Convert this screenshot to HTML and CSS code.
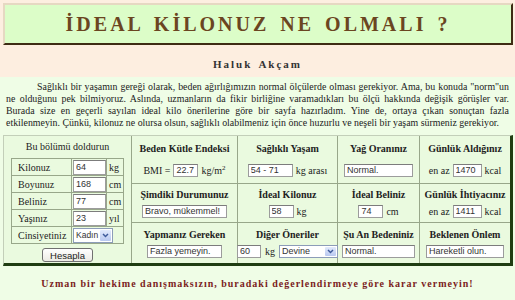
FILE: index.html
```html
<!DOCTYPE html>
<html lang="tr">
<head>
    <meta charset="UTF-8">
    <meta name="viewport" content="width=device-width, initial-scale=1.0">
    <link rel="stylesheet" href="styles.css">
</head>
<body>
    <header class="title-box">
        <h1>İDEAL KİLONUZ NE OLMALI ?</h1>
    </header>
    <p class="author">Haluk Akçam</p>

    <main class="panel">
        <p class="intro">
            <span>Sağlıklı bir yaşamın gereği olarak, beden ağırlığımızın normal ölçülerde olması gerekiyor. Ama, bu konuda "norm"un</span>
            <span>ne olduğunu pek bilmiyoruz. Aslında, uzmanların da fikir birliğine varamadıkları bu ölçü hakkında değişik görüşler var.</span>
            <span>Burada size en geçerli sayılan ideal kilo önerilerine göre bir sayfa hazırladım. Yine de, ortaya çıkan sonuçtan fazla</span>
            <span>etkilenmeyin. Çünkü, kilonuz ne olursa olsun, sağlıklı olabilmeniz için önce huzurlu ve neşeli bir yaşam sürmeniz gerekiyor.</span>
        </p>

        <div class="calc">
            <form class="inputs">
                <div class="inputs-title">Bu bölümü doldurun</div>
                <div class="form-grid">
                    <label>Kilonuz</label><span class="cell"><input class="box" value="64"></span><span class="unit">kg</span>
                    <label>Boyunuz</label><span class="cell"><input class="box" value="168"></span><span class="unit">cm</span>
                    <label>Beliniz</label><span class="cell"><input class="box" value="77"></span><span class="unit">cm</span>
                    <label>Yaşınız</label><span class="cell"><input class="box" value="23"></span><span class="unit">yıl</span>
                    <label>Cinsiyetiniz</label>
                    <span class="cell wide">
                        <span class="select">
                            <select><option>Kadın</option><option>Erkek</option></select>
                            <span class="arrow"><svg width="7" height="5" viewBox="0 0 7 5"><path d="M1 1 L3.5 3.6 L6 1" stroke="#3d5a9a" stroke-width="1.4" fill="none"/></svg></span>
                        </span>
                    </span>
                </div>
                <button type="button" class="btn">Hesapla</button>
            </form>

            <div class="results">
                <div class="res row-1">
                    <h3>Beden Kütle Endeksi</h3>
                    <div class="line">BMI = <input class="box w25" value="22.7"> kg/m<sup>2</sup></div>
                </div>
                <div class="res row-1">
                    <h3>Sağlıklı Yaşam</h3>
                    <div class="line"><input class="box w45" value="54 - 71"> kg arası</div>
                </div>
                <div class="res row-1">
                    <h3>Yağ Oranınız</h3>
                    <div class="line"><input class="box w69" value="Normal."></div>
                </div>
                <div class="res row-1">
                    <h3>Günlük Aldığınız</h3>
                    <div class="line">en az <input class="box w29" value="1470"> kcal</div>
                </div>

                <div class="res">
                    <h3>Şimdiki Durumunuz</h3>
                    <div class="line"><input class="box w85" value="Bravo, mükemmel!"></div>
                </div>
                <div class="res">
                    <h3>İdeal Kilonuz</h3>
                    <div class="line"><input class="box w25" value="58"> kg</div>
                </div>
                <div class="res">
                    <h3>İdeal Beliniz</h3>
                    <div class="line"><input class="box w25" value="74"> cm</div>
                </div>
                <div class="res">
                    <h3>Günlük İhtiyacınız</h3>
                    <div class="line">en az <input class="box w29" value="1411"> kcal</div>
                </div>

                <div class="res">
                    <h3>Yapmanız Gereken</h3>
                    <div class="line"><input class="box w75" value="Fazla yemeyin."></div>
                </div>
                <div class="res">
                    <h3>Diğer Öneriler</h3>
                    <div class="line tight">
                        <input class="box w24" value="60"> kg
                        <span class="select small">
                            <select><option>Devine</option><option>Robinson</option></select>
                            <span class="arrow"><svg width="7" height="5" viewBox="0 0 7 5"><path d="M1 1 L3.5 3.6 L6 1" stroke="#3d5a9a" stroke-width="1.4" fill="none"/></svg></span>
                        </span>
                    </div>
                </div>
                <div class="res">
                    <h3>Şu An Bedeniniz</h3>
                    <div class="line"><input class="box w73" value="Normal."></div>
                </div>
                <div class="res">
                    <h3>Beklenen Önlem</h3>
                    <div class="line"><input class="box w78" value="Hareketli olun."></div>
                </div>
            </div>
        </div>

        <p class="warning">Uzman bir hekime danışmaksızın, buradaki değerlendirmeye göre karar vermeyin!</p>
    </main>
</body>
</html>
```

FILE: styles.css
```css
:root {
    --peach: #fdeee0;
    --green: #effde6;
    --cell: #eafadf;
    --title-bg: #dcfdc8;
    --line: #98a78a;
    --dark: #1f3d12;
    --brown: #6b4521;
    --text: #222;
    --serif: "Liberation Serif", "Times New Roman", serif;
    --sans: "Liberation Sans", Arial, sans-serif;
}

* {
    box-sizing: border-box;
}

body {
    margin: 0;
    background: var(--peach);
    font-family: var(--serif);
    color: var(--text);
}

.title-box {
    margin: 3px 2px 0 3px;
    height: 42px;
    border: 2px solid;
    border-color: #e6d8c2 #3e2c14 #3e2c14 #e6d8c2;
    background: var(--title-bg);
    display: flex;
    align-items: center;
    justify-content: center;
}

.title-box h1 {
    margin: 0;
    font-size: 20px;
    letter-spacing: 3px;
    word-spacing: 3px;
    color: var(--brown);
}

.author {
    margin: 12px 0 6px;
    text-align: center;
    font-size: 11px;
    line-height: 14px;
    font-weight: bold;
    letter-spacing: 2px;
    word-spacing: 2px;
    color: #333;
}

.panel {
    background: var(--green);
    padding: 4px 0 20px;
}

/* the original wraps at fixed points; each line is its own block */
.intro {
    margin: 0 6px;
    font-size: 9.9px;
    line-height: 12px;
}

.intro span {
    display: block;
    text-align: justify;
    text-align-last: justify;
}

.intro span:first-child {
    text-indent: 31px;
}

.intro span:last-child {
    text-align-last: auto;
}

.calc {
    display: flex;
    margin: 6px 2px 0 3px;
    border-style: solid;
    border-width: 1px 3px 3px 1px;
    border-color: #c3cfb9 var(--dark) var(--dark) #c3cfb9;
    background: var(--cell);
}

/* left: input form */
.inputs {
    width: 127px;
    height: 127px;
    margin: 0;
    display: flex;
    flex-direction: column;
    align-items: center;
}

.inputs-title {
    margin-top: 5px;
    font-size: 10px;
    line-height: 12px;
}

.form-grid {
    margin-top: 5px;
    display: grid;
    grid-template-columns: 59px 34px 16px;
    grid-template-rows: repeat(5, 16px);
    gap: 1px;
    background: var(--line);
    border: 1px solid var(--line);
}

.form-grid > * {
    background: var(--cell);
    display: flex;
    align-items: center;
    font-size: 10px;
}

.form-grid label {
    padding-left: 6px;
}

.form-grid .unit {
    padding-left: 2px;
}

.form-grid .cell {
    padding-left: 1px;
}

.form-grid .wide {
    grid-column: span 2;
}

.form-grid .box {
    width: 33px;
    height: 15px;
}

.box {
    height: 13px;
    padding: 0 2px;
    border: 1px solid #9c9c9c;
    border-top-color: #7c7c7c;
    background: #fff;
    font-family: var(--sans);
    font-size: 9px;
    color: #333;
    outline: none;
}

.w24 { width: 24px; }
.w25 { width: 25px; }
.w29 { width: 29px; }
.w45 { width: 45px; }
.w69 { width: 69px; }
.w73 { width: 73px; }
.w75 { width: 75px; }
.w78 { width: 78px; }
.w85 { width: 85px; }

.select {
    display: inline-flex;
    height: 15px;
    border: 1px solid #8c9cb8;
    background: #fff;
}

.select select {
    appearance: none;
    -webkit-appearance: none;
    border: 0;
    background: transparent;
    width: 25px;
    padding: 0 0 0 2px;
    font-family: var(--sans);
    font-size: 8.5px;
    color: #333;
    outline: none;
}

.select .arrow {
    width: 11px;
    margin: 1px;
    border-radius: 1px;
    background: linear-gradient(#e2eafc, #b8c8f0);
    display: flex;
    align-items: center;
    justify-content: center;
}

.select.small {
    height: 13px;
}

.select.small select {
    width: 44px;
    font-size: 9px;
}

.btn {
    margin-top: 4px;
    width: 51px;
    height: 14px;
    padding: 0;
    border: 1px solid #707070;
    border-radius: 3px;
    background: linear-gradient(#ffffff, #ecebe4);
    font-family: var(--sans);
    font-size: 9.5px;
    color: #222;
}

/* right: results */
.results {
    flex: 1;
    height: 127px;
    display: grid;
    grid-template-columns: 105px 99px 81px 1fr;
    grid-template-rows: 47px 38px 1fr;
    gap: 1px;
    background: var(--line);
    border-left: 1px solid var(--line);
}

.res {
    background: var(--cell);
    display: flex;
    flex-direction: column;
    align-items: center;
    justify-content: center;
    gap: 4px;
}

.res.row-1 {
    gap: 9px;
}

.res h3 {
    margin: 0;
    font-size: 10px;
    line-height: 12px;
}

.line {
    display: flex;
    align-items: center;
    gap: 3px;
    font-size: 10px;
    white-space: nowrap;
}

.line sup {
    font-size: 7px;
    align-self: flex-start;
    margin-left: -3px;
}

.line.tight {
    gap: 4px;
}

.warning {
    margin: 12px 0 0;
    text-align: center;
    font-size: 10px;
    line-height: 12px;
    font-weight: bold;
    letter-spacing: 1px;
    color: #7b1d1d;
}
```
